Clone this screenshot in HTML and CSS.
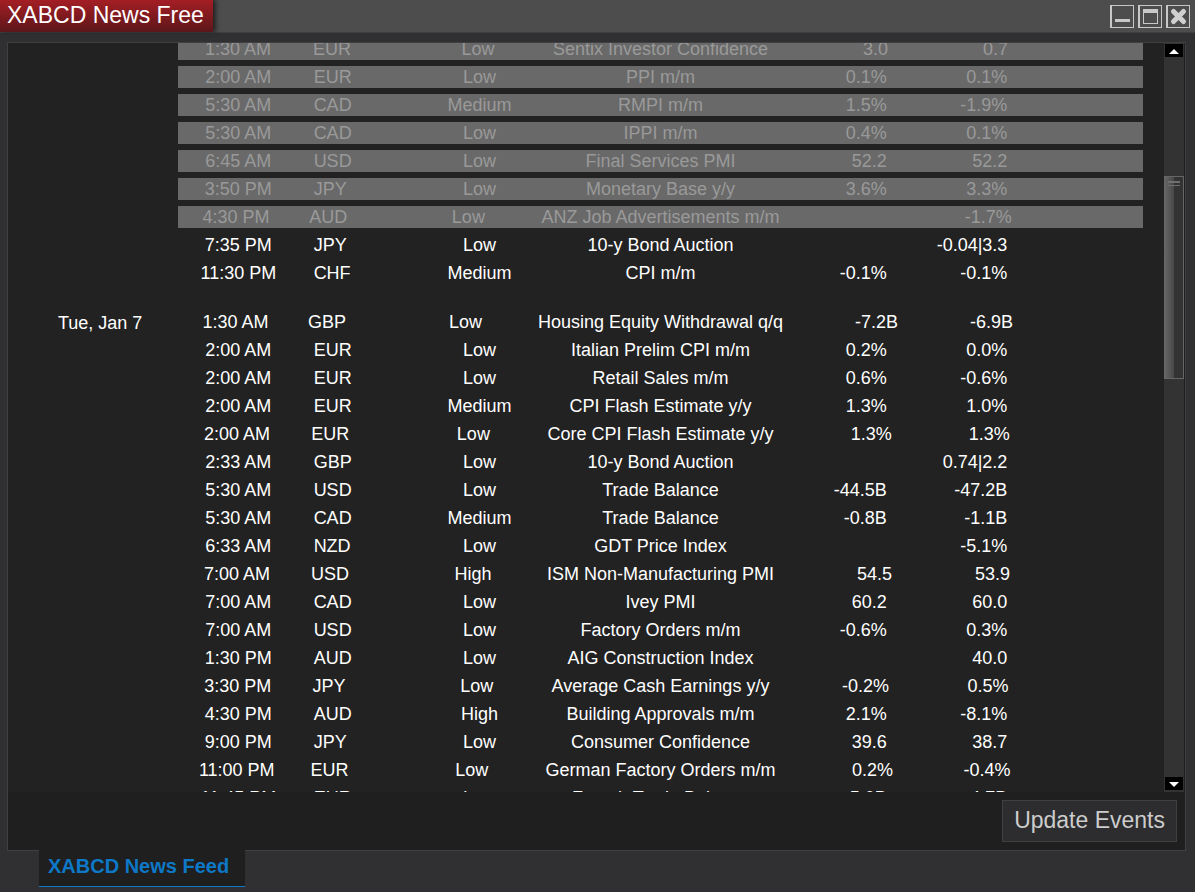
FILE: index.html
```html
<!DOCTYPE html>
<html lang="en">
<head>
<meta charset="utf-8">
<title>XABCD News Free</title>
<link rel="stylesheet" href="styles.css">
</head>
<body>
<header class="titlebar">
  <h1 class="title">XABCD News Free</h1>
  <div class="controls">
    <button class="control" type="button" aria-label="Minimize"><svg viewBox="0 0 24 23"><path class="fill" fill-rule="evenodd" d="M0 0h24v23H0zM2 1v21h21V1z"/><path class="fill" d="M5 14h15v3H5z"/></svg></button>
    <button class="control" type="button" aria-label="Maximize"><svg viewBox="0 0 24 23"><path class="fill" fill-rule="evenodd" d="M0 0h24v23H0zM2 1v21h21V1z"/><path class="fill" fill-rule="evenodd" d="M5 4h15v15H5zM6 8v10h13V8z"/></svg></button>
    <button class="control" type="button" aria-label="Close"><svg viewBox="0 0 24 23"><path class="fill" fill-rule="evenodd" d="M0 0h24v23H0zM2 1v21h21V1z"/><path class="cross" d="M7.500 6.500l10 10M17.500 6.500l-10 10"/></svg></button>
  </div>
</header>
<main class="panel">
  <div class="viewport">
    <div class="list">
      <section class="day">
        <h2 class="date"></h2>
        <table class="events"><tbody>
          <tr class="past"><td>1:30 AM</td><td>EUR</td><td>Low</td><td>Sentix Investor Confidence</td><td>3.0</td><td>0.7</td><td></td></tr>
          <tr class="past"><td>2:00 AM</td><td>EUR</td><td>Low</td><td>PPI m/m</td><td>0.1%</td><td>0.1%</td><td></td></tr>
          <tr class="past"><td>5:30 AM</td><td>CAD</td><td>Medium</td><td>RMPI m/m</td><td>1.5%</td><td>-1.9%</td><td></td></tr>
          <tr class="past"><td>5:30 AM</td><td>CAD</td><td>Low</td><td>IPPI m/m</td><td>0.4%</td><td>0.1%</td><td></td></tr>
          <tr class="past"><td>6:45 AM</td><td>USD</td><td>Low</td><td>Final Services PMI</td><td>52.2</td><td>52.2</td><td></td></tr>
          <tr class="past"><td>3:50 PM</td><td>JPY</td><td>Low</td><td>Monetary Base y/y</td><td>3.6%</td><td>3.3%</td><td></td></tr>
          <tr class="past"><td>4:30 PM</td><td>AUD</td><td>Low</td><td>ANZ Job Advertisements m/m</td><td></td><td>-1.7%</td><td></td></tr>
          <tr><td>7:35 PM</td><td>JPY</td><td>Low</td><td>10-y Bond Auction</td><td></td><td>-0.04|3.3</td><td></td></tr>
          <tr><td>11:30 PM</td><td>CHF</td><td>Medium</td><td>CPI m/m</td><td>-0.1%</td><td>-0.1%</td><td></td></tr>
        </tbody></table>
      </section>
      <section class="day">
        <h2 class="date">Tue, Jan 7</h2>
        <table class="events"><tbody>
          <tr><td>1:30 AM</td><td>GBP</td><td>Low</td><td>Housing Equity Withdrawal q/q</td><td>-7.2B</td><td>-6.9B</td><td></td></tr>
          <tr><td>2:00 AM</td><td>EUR</td><td>Low</td><td>Italian Prelim CPI m/m</td><td>0.2%</td><td>0.0%</td><td></td></tr>
          <tr><td>2:00 AM</td><td>EUR</td><td>Low</td><td>Retail Sales m/m</td><td>0.6%</td><td>-0.6%</td><td></td></tr>
          <tr><td>2:00 AM</td><td>EUR</td><td>Medium</td><td>CPI Flash Estimate y/y</td><td>1.3%</td><td>1.0%</td><td></td></tr>
          <tr><td>2:00 AM</td><td>EUR</td><td>Low</td><td>Core CPI Flash Estimate y/y</td><td>1.3%</td><td>1.3%</td><td></td></tr>
          <tr><td>2:33 AM</td><td>GBP</td><td>Low</td><td>10-y Bond Auction</td><td></td><td>0.74|2.2</td><td></td></tr>
          <tr><td>5:30 AM</td><td>USD</td><td>Low</td><td>Trade Balance</td><td>-44.5B</td><td>-47.2B</td><td></td></tr>
          <tr><td>5:30 AM</td><td>CAD</td><td>Medium</td><td>Trade Balance</td><td>-0.8B</td><td>-1.1B</td><td></td></tr>
          <tr><td>6:33 AM</td><td>NZD</td><td>Low</td><td>GDT Price Index</td><td></td><td>-5.1%</td><td></td></tr>
          <tr><td>7:00 AM</td><td>USD</td><td>High</td><td>ISM Non-Manufacturing PMI</td><td>54.5</td><td>53.9</td><td></td></tr>
          <tr><td>7:00 AM</td><td>CAD</td><td>Low</td><td>Ivey PMI</td><td>60.2</td><td>60.0</td><td></td></tr>
          <tr><td>7:00 AM</td><td>USD</td><td>Low</td><td>Factory Orders m/m</td><td>-0.6%</td><td>0.3%</td><td></td></tr>
          <tr><td>1:30 PM</td><td>AUD</td><td>Low</td><td>AIG Construction Index</td><td></td><td>40.0</td><td></td></tr>
          <tr><td>3:30 PM</td><td>JPY</td><td>Low</td><td>Average Cash Earnings y/y</td><td>-0.2%</td><td>0.5%</td><td></td></tr>
          <tr><td>4:30 PM</td><td>AUD</td><td>High</td><td>Building Approvals m/m</td><td>2.1%</td><td>-8.1%</td><td></td></tr>
          <tr><td>9:00 PM</td><td>JPY</td><td>Low</td><td>Consumer Confidence</td><td>39.6</td><td>38.7</td><td></td></tr>
          <tr><td>11:00 PM</td><td>EUR</td><td>Low</td><td>German Factory Orders m/m</td><td>0.2%</td><td>-0.4%</td><td></td></tr>
          <tr><td>11:45 PM</td><td>EUR</td><td>Low</td><td>French Trade Balance</td><td>-5.0B</td><td>-4.7B</td><td></td></tr>
        </tbody></table>
      </section>
    </div>
    <div class="scrollbar">
      <button class="arrow" type="button" aria-label="Scroll up"><svg viewBox="0 0 18 13"><path d="M4 10l5-5 5 5z"/></svg></button>
      <div class="track"><div class="thumb"></div></div>
      <button class="arrow" type="button" aria-label="Scroll down"><svg viewBox="0 0 18 13"><path d="M4 5h10l-5 5z"/></svg></button>
    </div>
  </div>
  <footer class="actions"><button class="update" type="button">Update Events</button></footer>
</main>
<nav class="tabs"><a class="tab" href="#feed">XABCD News Feed</a></nav>
</body>
</html>
```
FILE: styles.css
```css
* { box-sizing: border-box; }

body {
  margin: 0;
  height: 100vh;
  display: flex;
  flex-direction: column;
  overflow: hidden;
  background: #303032;
  color: #fff;
  font-family: "Liberation Sans", Arial, sans-serif;
  font-size: 18px;
  line-height: 22px;
}

button { font: inherit; padding: 0; cursor: pointer; }

.titlebar {
  flex: none;
  height: 33px;
  display: flex;
  justify-content: space-between;
  background: #4d4d4d;
  border-bottom: 1px solid #3f3f41;
}

.title {
  margin: 0;
  padding: 0 9px 0 7px;
  font-size: 23px;
  font-weight: normal;
  line-height: 30px;
  background: linear-gradient(#a41e24, #5c161a);
  box-shadow: 3px 0 4px #252525;
}

.controls { display: flex; gap: 4px; padding: 5px 5px 0 0; }

.control {
  width: 24px;
  height: 23px;
  border: 0;
  background: none;
}

.control svg, .arrow svg { display: block; width: 100%; height: 100%; }
.fill { fill: #c8c8c8; shape-rendering: crispEdges; }
.cross { fill: none; stroke: #d0d0d0; stroke-width: 5; stroke-linecap: round; }

.panel {
  flex: 1;
  min-height: 0;
  display: flex;
  flex-direction: column;
  margin: 9px 9px 0 7px;
  background: #1f1f1f;
  border: 1px solid #404043;
}

.viewport {
  flex: 1;
  min-height: 0;
  display: flex;
  overflow: hidden;
  background: #222;
}

.list {
  flex: 1;
  min-width: 0;
  margin-top: -5px;
  padding-right: 21px;
}

.day { display: flex; margin-bottom: 27px; }

.date {
  flex: none;
  width: 170px;
  margin: 0;
  padding: 1px 0 0 50px;
  font-size: 18px;
  font-weight: normal;
}

.events { flex: 1; display: block; }
.events tbody { display: flex; flex-direction: column; gap: 6px; }

.events tr {
  display: grid;
  grid-template-columns: 1fr 1fr 1fr 2fr 1fr 1fr 1fr;
  height: 22px;
}

.events .past { background: #696969; color: #999; }

.events td { padding: 0 15px; text-align: center; white-space: nowrap; }
.events td:nth-child(2) { text-align: left; }
.events td:nth-child(5), .events td:nth-child(6) { text-align: right; }

.scrollbar {
  flex: none;
  width: 21px;
  display: flex;
  flex-direction: column;
  padding: 1px 0 2px;
  background: #333;
  border-right: 1px solid #1e1e1e;
}

.arrow {
  flex: none;
  align-self: center;
  width: 18px;
  height: 13px;
  border: 0;
  background: #000;
}

.arrow path { fill: #fff; }

.track { flex: 1; padding-top: 119px; }

.thumb {
  height: 203px;
  border: 1px solid #666;
  border-width: 1px 1px 1px 0;
  background:
    linear-gradient(#707070, #707070) 4px 4px / 12px 2px no-repeat,
    linear-gradient(#707070, #707070) 4px 8px / 12px 1px no-repeat,
    linear-gradient(90deg, #686868, #484848 10px, #333 10px);
}

.actions {
  flex: none;
  display: flex;
  justify-content: flex-end;
  padding: 8px 8px 8px 0;
}

.update {
  height: 42px;
  padding: 0 11px 2px;
  border: 1px solid #404043;
  background: #2d2d30;
  color: #ccc;
  font-size: 23px;
  line-height: 38px;
}

.tabs { flex: none; display: flex; height: 41px; padding-left: 39px; }

.tab {
  position: relative;
  height: 37px;
  margin-top: -1px;
  padding: 0 16px 0 9px;
  background: #1f1f1f;
  border-bottom: 1px solid #0e78c8;
  color: #0e78c8;
  font-size: 20px;
  font-weight: bold;
  line-height: 32px;
  text-decoration: none;
}
```
